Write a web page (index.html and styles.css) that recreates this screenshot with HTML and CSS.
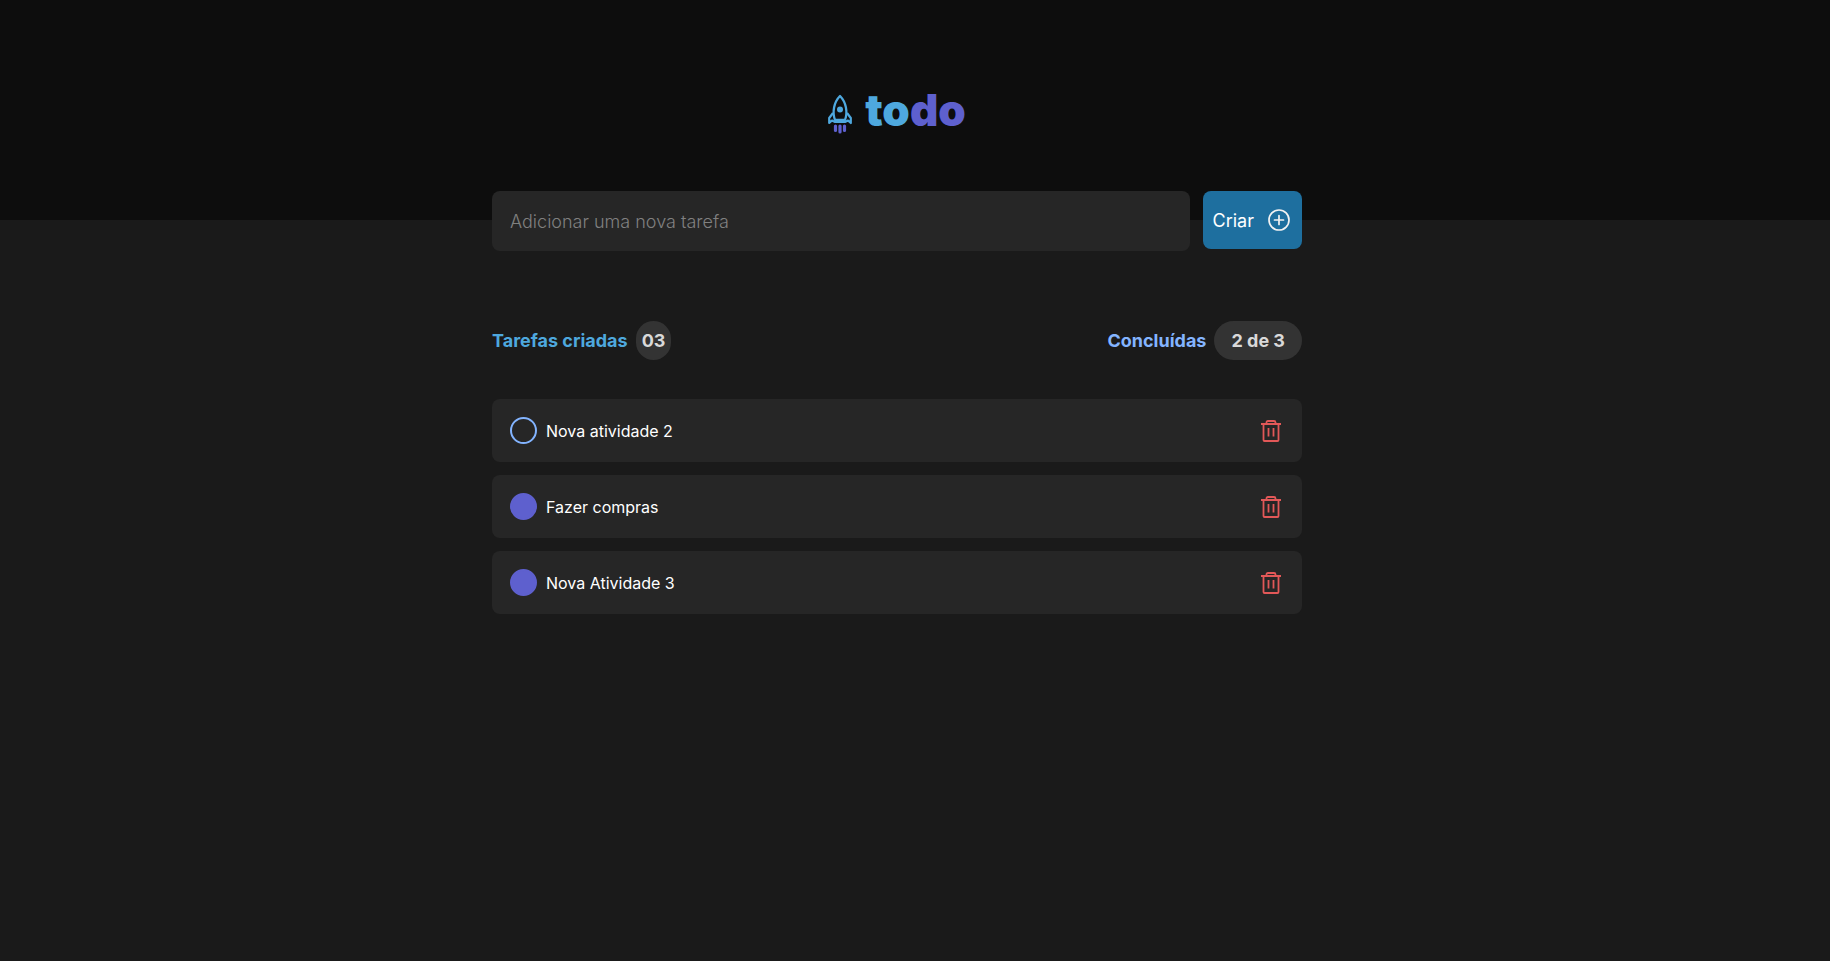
FILE: index.html
```html
<!DOCTYPE html>
<html lang="pt-BR">
<head>
    <meta charset="UTF-8">
    <meta name="viewport" content="width=device-width, initial-scale=1.0">
    <title>Todo</title>
    <link rel="stylesheet" href="styles.css">
</head>
<body>
    <header class="header">
        <div class="logo">
            <svg class="logo-icon" width="24" height="40" viewBox="0 0 24 40" fill="none">
                <path d="M7 26C4 18 6 8 12 2C18 8 20 18 17 26Z" stroke="#4EA8DE" stroke-width="2.3" stroke-linejoin="round"/>
                <path d="M5 19L1.2 24V29L4 26.500L7 28H17L20 26.500L22.800 29V24L19 19" stroke="#4EA8DE" stroke-width="2.2" stroke-linejoin="round"/>
                <circle cx="12" cy="15.5" r="3" fill="#4EA8DE"/>
                <path d="M7.5 32V36.500M12 32V38M16.5 32V36.500" stroke="#5E60CE" stroke-width="3.2" stroke-linecap="round"/>
            </svg>
            <h1 class="logo-text">to<span>do</span></h1>
        </div>
    </header>

    <main class="container">
        <form class="new-task" id="newTask">
            <input type="text" id="task" name="task" aria-label="Nova tarefa" placeholder="Adicionar uma nova tarefa">
            <button type="submit">
                Criar
                <svg width="22" height="22" viewBox="0 0 22 22" fill="none" stroke="#F2F2F2" stroke-width="1.7" stroke-linecap="round">
                    <circle cx="11" cy="11" r="10"/>
                    <path d="M11 6.5V15.5M6.5 11H15.5"/>
                </svg>
            </button>
        </form>

        <div class="info">
            <p class="created">Tarefas criadas <span class="badge">03</span></p>
            <p class="done">Concluídas <span class="badge badge-wide">2 de 3</span></p>
        </div>

        <ul class="tasks">
            <li class="task">
                <input type="checkbox" id="task1">
                <label for="task1">Nova atividade 2</label>
                <button type="button" class="delete" aria-label="Excluir">
                    <svg width="20" height="22" viewBox="0 0 20 22" fill="none" stroke="#E25858" stroke-width="1.8">
                        <path d="M0 4H20M5.5 4V2.5Q5.5 1 7 1H13Q14.5 1 14.5 2.5V4M2.5 4V20Q2.5 21 3.5 21H16.5Q17.5 21 17.5 20V4M7.5 8V16.5M12.5 8V16.5"/>
                    </svg>
                </button>
            </li>
            <li class="task">
                <input type="checkbox" id="task2" checked>
                <label for="task2">Fazer compras</label>
                <button type="button" class="delete" aria-label="Excluir">
                    <svg width="20" height="22" viewBox="0 0 20 22" fill="none" stroke="#E25858" stroke-width="1.8">
                        <path d="M0 4H20M5.5 4V2.5Q5.5 1 7 1H13Q14.5 1 14.5 2.5V4M2.5 4V20Q2.5 21 3.5 21H16.5Q17.5 21 17.5 20V4M7.5 8V16.5M12.5 8V16.5"/>
                    </svg>
                </button>
            </li>
            <li class="task">
                <input type="checkbox" id="task3" checked>
                <label for="task3">Nova Atividade 3</label>
                <button type="button" class="delete" aria-label="Excluir">
                    <svg width="20" height="22" viewBox="0 0 20 22" fill="none" stroke="#E25858" stroke-width="1.8">
                        <path d="M0 4H20M5.5 4V2.5Q5.5 1 7 1H13Q14.5 1 14.5 2.5V4M2.5 4V20Q2.5 21 3.5 21H16.5Q17.5 21 17.5 20V4M7.5 8V16.5M12.5 8V16.5"/>
                    </svg>
                </button>
            </li>
        </ul>
    </main>
</body>
</html>
```

FILE: styles.css
```css
* {
    margin: 0;
    padding: 0;
    box-sizing: border-box;
}
body {
    min-height: 100vh;
    background-color: #1a1a1a;
    color: #ffffff;
    font-family: Inter, sans-serif;
}
input, button {
    font-family: inherit;
}
.header {
    height: 220px;
    padding-right: 36px;
    background-color: #0d0d0d;
    display: flex;
    align-items: center;
    justify-content: center;
}
.logo {
    display: flex;
    align-items: flex-end;
    gap: 13px;
}
.logo-text {
    color: #4ea8de;
    font-size: 44px;
    font-weight: 900;
    line-height: 48px;
}
.logo-text span {
    color: #5e60ce;
}
.container {
    padding-right: 36px;
    display: flex;
    flex-direction: column;
    align-items: center;
}
.new-task, .info, .tasks {
    width: 100%;
    max-width: 810px;
}
.new-task {
    margin-top: -29px;
    display: flex;
    align-items: flex-start;
    gap: 13px;
}
.new-task input {
    flex: 1;
    min-width: 0;
    height: 60px;
    padding: 0 18px;
    background-color: #262626;
    border: none;
    border-radius: 8px;
    color: #f2f2f2;
    font-size: 18px;
    font-weight: 300;
}
.new-task input::placeholder {
    color: #808080;
}
.new-task button {
    height: 58px;
    padding: 0 12px 0 10px;
    display: flex;
    align-items: center;
    gap: 14px;
    background-color: #1e6f9f;
    border: none;
    border-radius: 8px;
    color: #ffffff;
    font-size: 18px;
    cursor: pointer;
}
.info {
    margin-top: 70px;
    display: flex;
    justify-content: space-between;
}
.info p {
    display: flex;
    align-items: center;
    gap: 8px;
    font-size: 18px;
    font-weight: 700;
}
.created {
    color: #4ea8de;
}
.done {
    color: #83b4ff;
}
.badge {
    padding: 0 6px;
    background-color: #333333;
    border-radius: 20px;
    color: #d9d9d9;
    line-height: 39px;
}
.badge-wide {
    padding: 0 17px;
}
.tasks {
    margin-top: 39px;
    display: flex;
    flex-direction: column;
    gap: 13px;
    list-style: none;
}
.task {
    height: 63px;
    padding: 0 21px 0 18px;
    display: flex;
    align-items: center;
    gap: 9px;
    background-color: #262626;
    border-radius: 8px;
}
.task input {
    appearance: none;
    width: 27px;
    height: 27px;
    border: 2px solid #83b4ff;
    border-radius: 50%;
    cursor: pointer;
}
.task input:checked {
    border-color: #5e60ce;
    background-color: #5e60ce;
}
.task label {
    flex: 1;
    font-size: 16px;
}
.delete {
    display: flex;
    background: none;
    border: none;
    cursor: pointer;
}
```
